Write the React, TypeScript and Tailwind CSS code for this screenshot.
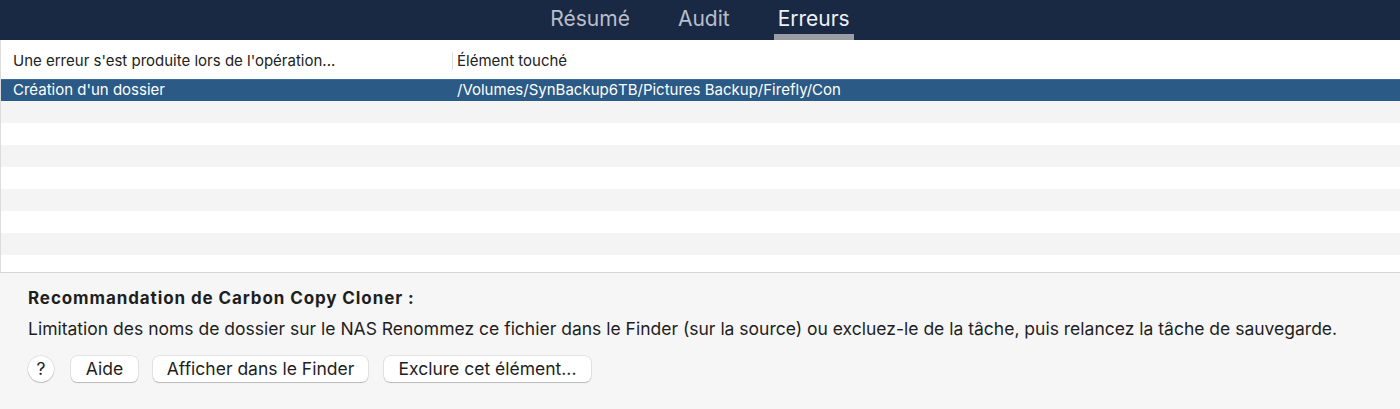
export default function App() {
  const stripes = [
    "bg-[#f4f4f4]",
    "bg-white",
    "bg-[#f4f4f4]",
    "bg-white",
    "bg-[#f4f4f4]",
    "bg-white",
    "bg-[#f4f4f4]",
  ];
  const btn =
    "h-[26px] rounded-[6px] bg-white shadow-[0_0_0_0.5px_rgba(0,0,0,0.15),0_1px_1px_rgba(0,0,0,0.18)] flex items-center justify-center";
  return (
    <div
      className="w-[1400px] h-[409px] bg-[#f6f6f6] flex flex-col overflow-hidden"
      style={{ fontFamily: 'Inter, "Liberation Sans", Arial, sans-serif' }}
    >
      {/* Tab bar */}
      <div className="h-[40px] bg-[#1a2943] flex justify-center shrink-0">
        <div className="flex items-stretch gap-[40px]">
          <div className="px-[4px] flex items-start pt-[3px] text-[21px] text-[#b8bfca]">Résumé</div>
          <div className="px-[4px] flex items-start pt-[3px] text-[21px] text-[#b8bfca]">Audit</div>
          <div className="px-[4px] relative flex items-start pt-[3px] text-[21px] text-[#eef1f5]">
            Erreurs
            <div className="absolute left-0 right-0 bottom-0 h-[6px] bg-[#9a9ea4]" />
          </div>
        </div>
      </div>

      {/* Table */}
      <div className="h-[233px] bg-white border-l border-[#dcdcdc] border-b border-b-[#d6d6d6] flex flex-col shrink-0 overflow-hidden text-[15px]">
        <div className="h-[39px] flex items-center shrink-0 text-[#222] pt-[3px]">
          <div className="w-[452px] pl-[12px] border-r border-[#dedede] h-[18px] flex items-center">
            Une erreur s'est produite lors de l'opération...
          </div>
          <div className="pl-[4px]">Élément touché</div>
        </div>
        <div className="h-[22px] bg-[#2a5a85] border-t border-[#3e6c95] flex items-center text-white shrink-0">
          <div className="w-[452px] pl-[12px]">Création d'un dossier</div>
          <div className="pl-[4px]">/Volumes/SynBackup6TB/Pictures Backup/Firefly/Con</div>
        </div>
        {stripes.map((c, i) => (
          <div key={i} className={`h-[22px] shrink-0 ${c}`} />
        ))}
        <div className="flex-1 bg-white" />
      </div>

      {/* Recommendation */}
      <div className="pl-[28px] pt-[15px] text-[#1e1e1e]">
        <div className="text-[17px] font-bold tracking-[0.9px] leading-[20px]">Recommandation de Carbon Copy Cloner :</div>
        <div className="text-[17.5px] leading-[20px] mt-[11px]">
          Limitation des noms de dossier sur le NAS Renommez ce fichier dans le Finder (sur la source) ou excluez-le de la tâche, puis relancez la tâche de sauvegarde.
        </div>
        <div className="flex items-center mt-[17px] text-[17.5px]">
          <div className="w-[26px] h-[26px] rounded-full bg-white shadow-[0_0_0_0.5px_rgba(0,0,0,0.15),0_1px_1px_rgba(0,0,0,0.18)] flex items-center justify-center">?</div>
          <div className={`ml-[17px] w-[67px] ${btn}`}>Aide</div>
          <div className={`ml-[15px] w-[215px] ${btn}`}>Afficher dans le Finder</div>
          <div className={`ml-[16px] w-[207px] ${btn}`}>Exclure cet élément...</div>
        </div>
      </div>
    </div>
  );
}
